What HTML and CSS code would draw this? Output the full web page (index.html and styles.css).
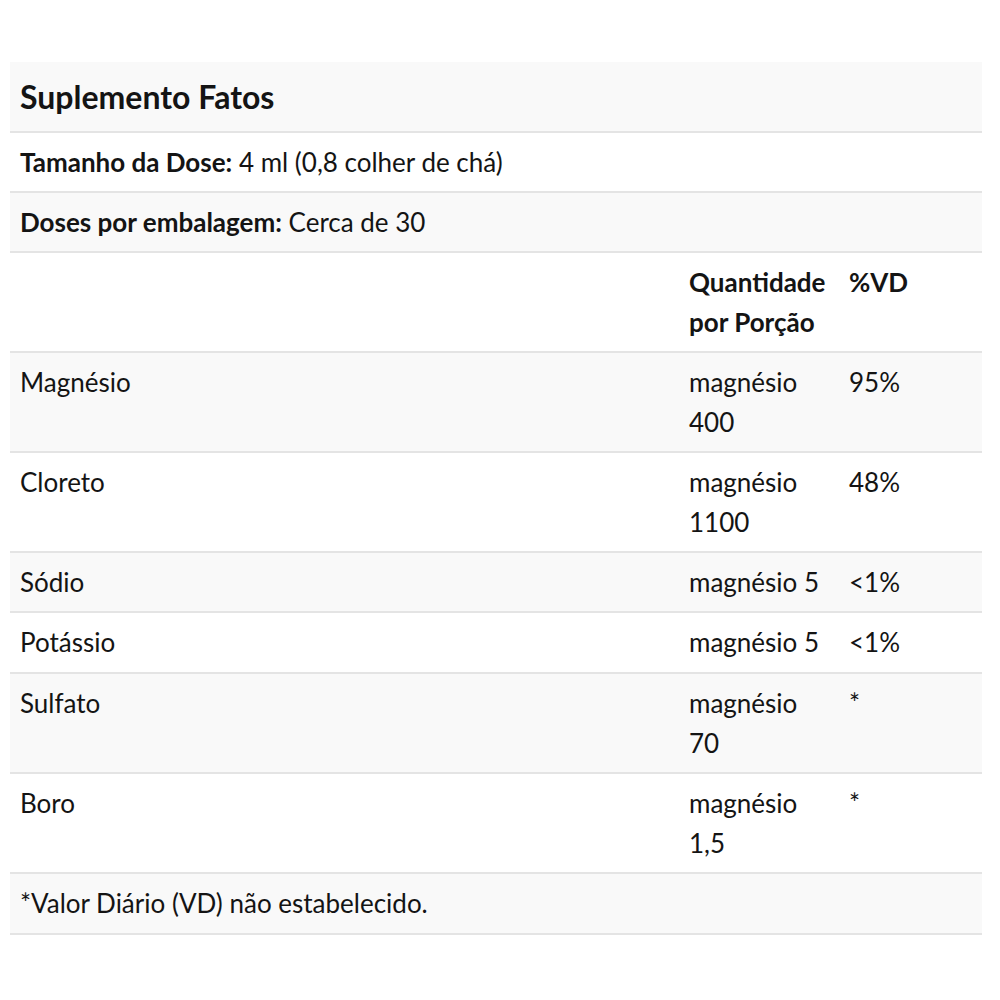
FILE: index.html
```html
<!DOCTYPE html>
<html lang="pt">
<head>
<meta charset="utf-8">
<link rel="stylesheet" href="styles.css">
</head>
<body>
<div class="wrap">
<table class="facts">
  <colgroup>
    <col class="c1"><col class="c2"><col class="c3">
  </colgroup>
  <tbody>
    <tr class="title"><td colspan="3">Suplemento Fatos</td></tr>
    <tr><td colspan="3"><b>Tamanho da Dose:</b> 4 ml (0,8 colher de chá)</td></tr>
    <tr><td colspan="3"><b>Doses por embalagem:</b> Cerca de 30</td></tr>
    <tr class="head"><td></td><td><b>Quantidade por Porção</b></td><td><b>%VD</b></td></tr>
    <tr><td>Magnésio</td><td>magnésio 400</td><td>95%</td></tr>
    <tr><td>Cloreto</td><td>magnésio 1100</td><td>48%</td></tr>
    <tr><td>Sódio</td><td>magnésio 5</td><td>&lt;1%</td></tr>
    <tr class="tall"><td>Potássio</td><td>magnésio 5</td><td>&lt;1%</td></tr>
    <tr><td>Sulfato</td><td>magnésio 70</td><td>*</td></tr>
    <tr><td>Boro</td><td>magnésio 1,5</td><td>*</td></tr>
    <tr class="tall"><td colspan="3">*Valor Diário (VD) não estabelecido.</td></tr>
  </tbody>
</table>
</div>
</body>
</html>
```

FILE: styles.css
```css
html, body {
  margin: 0;
  padding: 0;
  background: #ffffff;
}
body {
  font-family: Lato, "Open Sans", sans-serif;
  color: #141414;
}
.wrap {
  padding: 62px 0 0 10px;
  width: 972px;
}
.facts {
  width: 972px;
  border-collapse: collapse;
  table-layout: fixed;
  font-size: 26px;
  line-height: 40px;
}
.c1 { width: 669px; }
.c2 { width: 160px; }
.c3 { width: 143px; }
.facts td {
  padding: 9px 10px 9px 10px;
  vertical-align: top;
  border-bottom: 2px solid #e4e4e4;
  text-align: left;
}
.facts tr.tall td {
  padding-bottom: 10px;
}
.facts tr:nth-child(odd) td {
  background: #f9f9f9;
}
.facts b {
  font-weight: 700;
}
.title td {
  font-size: 32px;
  font-weight: 700;
  padding: 15px 10px 14px 10px;
}
```
